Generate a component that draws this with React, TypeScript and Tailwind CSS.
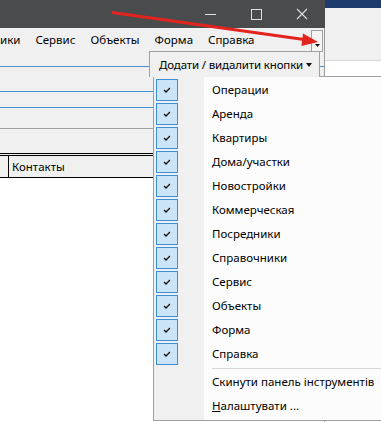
import React from 'react';

const items = [
  'Операции',
  'Аренда',
  'Квартиры',
  'Дома/участки',
  'Новостройки',
  'Коммерческая',
  'Посредники',
  'Справочники',
  'Сервис',
  'Объекты',
  'Форма',
  'Справка',
];

function Check() {
  return (
    <div className="w-[22px] h-[22px] border border-[#3c8fdc] bg-[#cce4f7] flex items-center justify-center">
      <svg width="10" height="10" viewBox="0 0 10 10">
        <polyline points="2,5 4,7 8,3" fill="none" stroke="#111" strokeWidth="1.3" />
      </svg>
    </div>
  );
}

function TitleBar() {
  return (
    <div className="h-[28px] bg-[#494b4d] flex justify-end">
      <div className="w-[46px] flex items-center justify-center">
        <div className="w-[11px] h-px bg-[#e0e0e0]" />
      </div>
      <div className="w-[46px] flex items-center justify-center">
        <div className="w-[11px] h-[11px] border border-[#e0e0e0]" />
      </div>
      <div className="w-[46px] flex items-center justify-center">
        <svg width="12" height="12" viewBox="0 0 12 12">
          <path d="M1 1 L11 11 M11 1 L1 11" stroke="#e0e0e0" strokeWidth="1.1" />
        </svg>
      </div>
    </div>
  );
}

function MenuBar() {
  return (
    <div className="h-[24px] bg-[#f0f0f0] flex items-center text-[11.5px] text-black whitespace-nowrap">
      <span className="pr-[7.5px]">ики</span>
      <span className="px-[7.5px]">Сервис</span>
      <span className="px-[7.5px]">Объекты</span>
      <span className="px-[7.5px]">Форма</span>
      <span className="px-[7.5px]">Справка</span>
      <div className="ml-auto mr-px self-end w-[12px] h-[22px] border border-[#a0a0a0] bg-[#f4f4f4] flex items-end justify-center pb-[4px]">
        <svg width="5" height="3" viewBox="0 0 5 3">
          <polygon points="0,0 5,0 2.5,3" fill="#111" />
        </svg>
      </div>
    </div>
  );
}

export default function App() {
  return (
    <div className="relative w-[381px] h-[422px] overflow-hidden bg-white font-['Noto_Sans',sans-serif] flex">
      {/* window */}
      <div className="w-[325px] flex flex-col">
        <TitleBar />
        <div className="flex-1 flex flex-col border-r border-[#9a9a9a]">
          <MenuBar />
          <div className="bg-[#f0f0f0]">
            <div className="h-[14px]" />
            <div className="h-[25px] border-t border-[#4a90cf]" />
            <div className="h-[16px] border-t border-[#4a90cf]" />
            <div className="h-[21px] border-t border-[#4a90cf]" />
            <div className="h-[25px] border-t border-[#a0a0a0]" />
            <div className="h-[2px] border-t border-black" />
            <div className="h-[23px] border-t border-b border-black flex items-center text-[11.5px]">
              <div className="w-[9px] h-full border-r border-black" />
              <span className="pl-[3px]">Контакты</span>
            </div>
          </div>
          <div className="flex-1 bg-white" />
        </div>
      </div>

      {/* desktop behind */}
      <div className="flex-1 flex flex-col">
        <div className="h-[8px] bg-[#1c3a6c]" />
        <div className="h-[53px] bg-[#f0f0f0] border-b border-[#d6d6d6]" />
        <div className="flex-1 bg-white" />
      </div>

      {/* popup */}
      <div className="absolute left-[149px] top-[51px] z-20 w-[171px] h-[26px] border border-b-0 border-[#a0a0a0] bg-[#f0f0f0] flex items-center pl-[9px] pr-[7px] text-[11.5px] tracking-[-0.15px] text-black whitespace-nowrap">
        <span>Додати / видалити кнопки</span>
        <svg className="ml-auto" width="6" height="4" viewBox="0 0 6 4">
          <polygon points="0,0 6,0 3,4" fill="#111" />
        </svg>
      </div>
      <div className="absolute left-[153px] top-[76px] z-10 w-[240px] h-[345px] border border-[#a0a0a0] bg-[linear-gradient(to_right,#f0f0f0_50px,#fcfcfc_50px)] pt-px text-[11.5px] text-black whitespace-nowrap">
        {items.map((it) => (
          <div key={it} className="h-[24px] flex items-center">
            <div className="w-[50px] pl-[2px] flex items-center">
              <Check />
            </div>
            <span className="pl-[8px]">{it}</span>
          </div>
        ))}
        <div className="flex mt-[2px] mb-px">
          <div className="w-[50px]" />
          <div className="ml-[8px] flex-1 h-px bg-[#d7d7d7]" />
        </div>
        <div className="h-[24px] flex items-center">
          <div className="w-[50px]" />
          <span className="pl-[8px]">Скинути панель інструментів</span>
        </div>
        <div className="h-[24px] flex items-center">
          <div className="w-[50px]" />
          <span className="pl-[8px]">
            <span className="underline">Н</span>алаштувати ...
          </span>
        </div>
      </div>

      {/* red annotation arrow */}
      <svg className="absolute inset-0 z-30 pointer-events-none" width="381" height="422" viewBox="0 0 381 422">
        <line x1="112" y1="12.5" x2="304" y2="39.5" stroke="#e3231f" strokeWidth="3" />
        <polygon points="318,42 303,33.5 301.4,46" fill="#e3231f" />
      </svg>
    </div>
  );
}
